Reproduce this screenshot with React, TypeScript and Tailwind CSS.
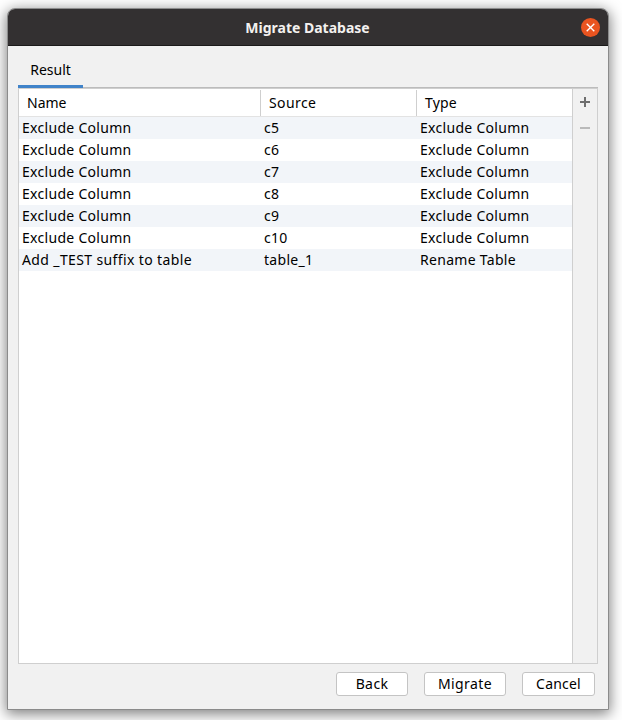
const rows = [
  ['Exclude Column', 'c5', 'Exclude Column'],
  ['Exclude Column', 'c6', 'Exclude Column'],
  ['Exclude Column', 'c7', 'Exclude Column'],
  ['Exclude Column', 'c8', 'Exclude Column'],
  ['Exclude Column', 'c9', 'Exclude Column'],
  ['Exclude Column', 'c10', 'Exclude Column'],
  ['Add _TEST suffix to table', 'table_1', 'Rename Table'],
];

function TitleBar() {
  return (
    <header className="grid h-[37px] shrink-0 grid-cols-[1fr_auto_1fr] items-center rounded-t-[7px] border-b border-[#1b1a1a] bg-[#333031] pr-2 pl-[7px]">
      <span />
      <h1 className="pt-[2px] text-[14px] leading-5 font-bold text-[#f3f1ef]">Migrate Database</h1>
      <button aria-label="Close" className="flex size-[19px] items-center justify-center justify-self-end rounded-full bg-[#e95420]">
        <svg width="9" height="9" viewBox="0 0 9 9" fill="none" stroke="#fff" strokeWidth="1.35">
          <path d="M0.7 0.7L8.3 8.3M8.3 0.7L0.7 8.3" />
        </svg>
      </button>
    </header>
  );
}

function Table() {
  return (
    <div className="min-w-0 flex-1 bg-white">
      <div className="grid h-7 grid-cols-[242px_156px_1fr] border-b border-[#e3e3e3] py-px">
        <div className="border-r border-[#cfcfcf] pl-2 leading-[26px]">Name</div>
        <div className="border-r border-[#cfcfcf] pl-2 leading-[26px] tracking-[0.4px]">Source</div>
        <div className="pl-2 leading-[26px] tracking-[0.2px]">Type</div>
      </div>
      {rows.map(([name, source, type], i) => (
        <div key={i} className="grid h-[22px] grid-cols-[242px_156px_1fr] leading-[22px] tracking-[0.3px] whitespace-nowrap odd:bg-white even:bg-[#f2f5f9]">
          <div className={i === 6 ? 'pl-[3px] tracking-[0.38px]' : 'pl-[3px]'}>{name}</div>
          <div className="pl-[3px]">{source}</div>
          <div className="pl-[3px]">{type}</div>
        </div>
      ))}
    </div>
  );
}

const buttonClass = 'h-6 rounded-[3px] border border-[#c4c4c4] bg-white text-center leading-[22px]';

export default function App() {
  return (
    <div className="flex h-[720px] w-[622px] overflow-hidden bg-white pt-2 pl-[7px] font-['Noto_Sans',sans-serif] text-[14px] text-black">
      <main className="flex h-[702px] w-[602px] flex-col rounded-t-lg border border-[#8b8b8b] bg-[#f1f1f1] shadow-[0_3px_14px_1px_rgba(0,0,0,0.5)]">
        <TitleBar />
        <div className="flex min-h-0 flex-1 flex-col px-2.5">
          <nav className="flex h-[42px] items-end border-b border-[#bcbcbc]">
            <div className="-mb-px h-[34px] w-[65px] border-b-[3px] border-[#4083c9] text-center leading-[31px]">Result</div>
          </nav>
          <section className="flex h-[576px] border border-[#cfcfcf]">
            <Table />
            <aside className="flex w-[25px] flex-col items-center border-l border-[#cfcfcf] pt-2">
              <svg width="10" height="36" viewBox="0 0 10 36" shapeRendering="crispEdges">
                <path d="M0 4h10v2H0zM4 0h2v10H4z" fill="#6e6e6e" />
                <path d="M0 30h10v2H0z" fill="#bababa" />
              </svg>
            </aside>
          </section>
          <footer className="flex justify-end gap-4 pt-2 pr-[3px]">
            <button className={`${buttonClass} w-[72px] tracking-[0.4px]`}>Back</button>
            <button className={`${buttonClass} w-[82px] tracking-[0.4px]`}>Migrate</button>
            <button className={`${buttonClass} w-[73px] tracking-[0.2px]`}>Cancel</button>
          </footer>
        </div>
      </main>
    </div>
  );
}
